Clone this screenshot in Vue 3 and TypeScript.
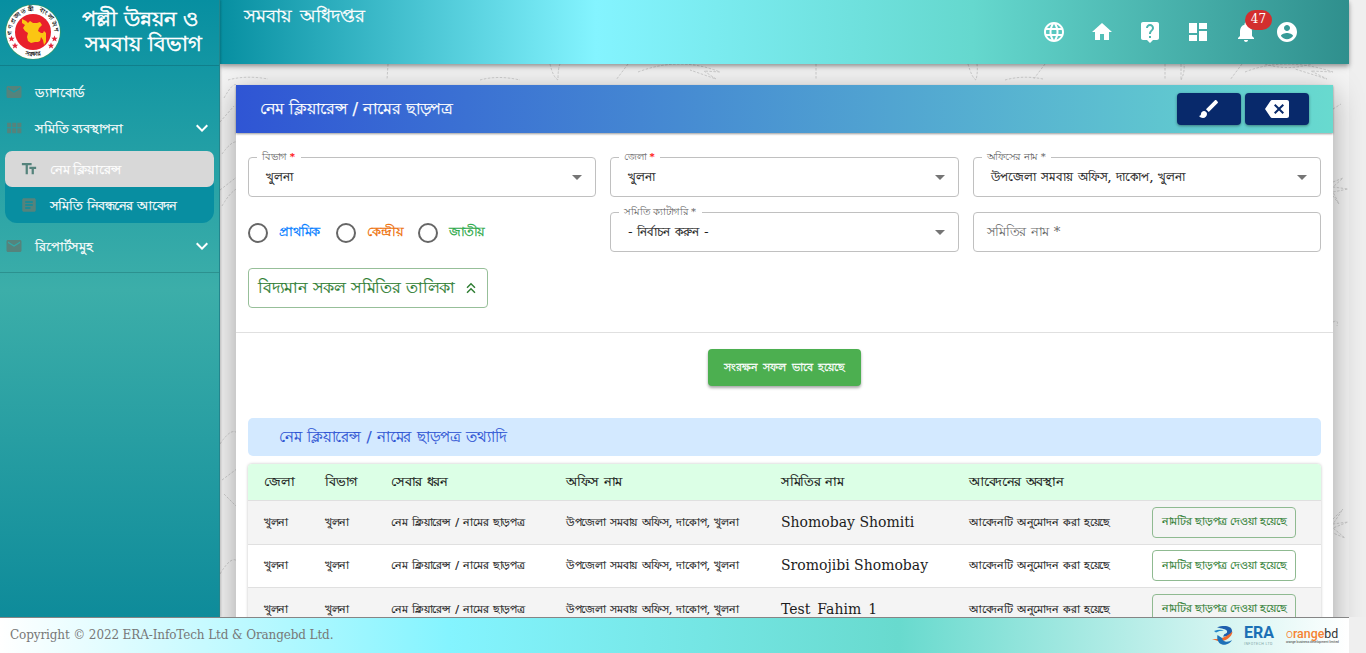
<script setup lang="ts">
interface Field {
  label: string
  value: string
  required?: boolean
  star?: boolean
}

const icons = {
  globe: 'M11.99 2C6.47 2 2 6.48 2 12s4.47 10 9.99 10C17.52 22 22 17.52 22 12S17.52 2 11.99 2zm6.93 6h-2.95c-.32-1.25-.78-2.45-1.38-3.56 1.84.63 3.37 1.91 4.33 3.56zM12 4.04c.83 1.2 1.48 2.53 1.91 3.96h-3.82c.43-1.43 1.08-2.76 1.91-3.96zM4.26 14C4.1 13.36 4 12.69 4 12s.1-1.36.26-2h3.38c-.08.66-.14 1.32-.14 2 0 .68.06 1.34.14 2H4.26zm.82 2h2.95c.32 1.25.78 2.45 1.38 3.56-1.84-.63-3.37-1.9-4.33-3.56zm2.95-8H5.08c.96-1.66 2.49-2.93 4.33-3.56C8.81 5.55 8.35 6.75 8.03 8zM12 19.96c-.83-1.2-1.48-2.53-1.91-3.96h3.82c-.43 1.43-1.08 2.76-1.91 3.96zM14.34 14H9.66c-.09-.66-.16-1.32-.16-2 0-.68.07-1.35.16-2h4.68c.09.65.16 1.32.16 2 0 .68-.07 1.34-.16 2zm.25 5.56c.6-1.11 1.06-2.31 1.38-3.56h2.95c-.96 1.65-2.49 2.93-4.33 3.56zM16.36 14c.08-.66.14-1.32.14-2 0-.68-.06-1.34-.14-2h3.38c.16.64.26 1.31.26 2s-.1 1.36-.26 2h-3.38z',
  home: 'M10 20v-6h4v6h5v-8h3L12 3 2 12h3v8z',
  help: 'M19 2H5c-1.11 0-2 .9-2 2v14c0 1.1.89 2 2 2h4l3 3 3-3h4c1.1 0 2-.9 2-2V4c0-1.1-.9-2-2-2zm-6 16h-2v-2h2v2zm2.07-7.75l-.9.92C13.45 11.9 13 12.5 13 14h-2v-.5c0-1.1.45-2.1 1.17-2.83l1.24-1.26c.37-.36.59-.86.59-1.41 0-1.1-.9-2-2-2s-2 .9-2 2H8c0-2.21 1.79-4 4-4s4 1.79 4 4c0 .88-.36 1.68-.93 2.25z',
  dashboard: 'M3 13h8V3H3v10zm0 8h8v-6H3v6zm10 0h8V11h-8v10zm0-18v6h8V3h-8z',
  bell: 'M12 22c1.1 0 2-.9 2-2h-4c0 1.1.89 2 2 2zm6-6v-5c0-3.07-1.64-5.64-4.5-6.32V4c0-.83-.67-1.5-1.5-1.5s-1.5.67-1.5 1.5v.68C7.63 5.36 6 7.92 6 11v5l-2 2v1h16v-1l-2-2z',
  account: 'M12 2C6.48 2 2 6.48 2 12s4.48 10 10 10 10-4.48 10-10S17.52 2 12 2zm0 3c1.66 0 3 1.34 3 3s-1.34 3-3 3-3-1.34-3-3 1.34-3 3-3zm0 14.2c-2.5 0-4.71-1.28-6-3.22.03-1.99 4-3.08 6-3.08 1.99 0 5.97 1.09 6 3.08-1.29 1.94-3.5 3.22-6 3.22z',
  brush: 'M7 14c-1.66 0-3 1.34-3 3 0 1.31-1.16 2-2 2 .92 1.22 2.49 2 4 2 2.21 0 4-1.79 4-4 0-1.66-1.34-3-3-3zm13.71-9.37l-1.34-1.34c-.39-.39-1.02-.39-1.41 0L9 12.25 11.75 15l8.96-8.96c.39-.39.39-1.02 0-1.41z',
  backspace: 'M22 3H7c-.69 0-1.23.35-1.59.88L0 12l5.41 8.11c.36.53.9.89 1.59.89h15c1.1 0 2-.9 2-2V5c0-1.1-.9-2-2-2zm-3 12.59L17.59 17 14 13.41 10.41 17 9 15.59 12.59 12 9 8.41 10.41 7 14 10.59 17.59 7 19 8.41 15.41 12 19 15.59z',
  mail: 'M20 4H4c-1.1 0-1.99.9-1.99 2L2 18c0 1.1.9 2 2 2h16c1.1 0 2-.9 2-2V6c0-1.1-.9-2-2-2zm0 4l-8 5-8-5V6l8 5 8-5v2z',
  module: 'M2.8 11h5.400V5H2.800v6zm0 8h5.400v-6.600H2.800V19zm6.800 0h5.400v-6.600H9.600V19zm6.800 0h5.400v-6.600h-5.400V19zM9.600 11h5.400V5H9.600v6zm6.800-6v6h5.400V5h-5.400z',
  text: 'M2.5 4v3h5v12h3V7h5V4h-13zm19 5h-9v3h3v7h3v-7h3V9z',
  article: 'M19 3H5c-1.1 0-2 .9-2 2v14c0 1.1.9 2 2 2h14c1.1 0 2-.9 2-2V5c0-1.1-.9-2-2-2zm-5 14H7v-2h7v2zm3-4H7v-2h10v2zm0-4H7V7h10v2z',
  expand: 'M16.59 8.59L12 13.17 7.41 8.59 6 10l6 6 6-6z',
  drop: 'M7 10l5 5 5-5z',
  doubleUp: 'M6 17.59L7.41 19 12 14.42 16.59 19 18 17.59l-6-6zM6 11l1.41 1.41L12 7.83l4.59 4.58L18 11l-6-6z',
}

const toolbar = [icons.globe, icons.home, icons.help, icons.dashboard]

const topFields: Field[] = [
  { label: 'বিভাগ', value: 'খুলনা', required: true },
  { label: 'জেলা', value: 'খুলনা', required: true },
  { label: 'অফিসের নাম', value: 'উপজেলা সমবায় অফিস, দাকোপ, খুলনা', star: true },
]

const radios = [
  { label: 'প্রাথমিক', tone: 'tone-blue' },
  { label: 'কেন্দ্রীয়', tone: 'tone-orange' },
  { label: 'জাতীয়', tone: 'tone-green' },
]

const headers = ['জেলা', 'বিভাগ', 'সেবার ধরন', 'অফিস নাম', 'সমিতির নাম', 'আবেদনের অবস্থান', '']
const names = ['Shomobay Shomiti', 'Sromojibi Shomobay', 'Test_Fahim_1']
</script>

<template>
  <div class="page">
    <div class="body">
      <aside class="sidebar">
        <div class="brand">
          <svg class="seal" viewBox="0 0 56 56">
            <circle cx="28" cy="28" r="27.6" fill="#3f9a62" />
            <circle cx="28" cy="28" r="27" fill="#fff" />
            <circle cx="28" cy="28" r="18" fill="#e8202c" />
            <path
              d="M17 15l4 2 2 2 2-2 3 2 4 0 3-1 2 3-3 3-1 3 3 2 2 0 1-2 2 2 0 9-2 3-1-5-2-3-1 4-2 1-3 0-4 1-3-2-1-4 1-4-3-2-2-3 2-3-3-2z"
              fill="#fbc613"
            />
            <defs>
              <path id="arc-top" d="M7.500 30.500A20.700 20.700 0 1 1 48.500 30.500" />
              <path id="arc-bottom" d="M11 45.200A24.300 24.300 0 0 0 45 45.200" />
            </defs>
            <text class="seal-text"><textPath href="#arc-top" textLength="68">গণপ্রজাতন্ত্রী বাংলাদেশ</textPath></text>
            <text class="seal-text"><textPath href="#arc-bottom" startOffset="50%" text-anchor="middle">সরকার</textPath></text>
            <g fill="#e0243a">
              <path d="M6.500 31.500l.9 2.300h2.300l-1.800 1.500.7 2.300-2.100-1.400-2.100 1.400.7-2.300-1.800-1.500h2.300z" />
              <path d="M10 38.500l.9 2.300h2.300l-1.800 1.500.7 2.300-2.100-1.400-2.100 1.400.7-2.300-1.800-1.500h2.300z" />
              <path d="M49.500 31.500l.9 2.300h2.300l-1.800 1.500.7 2.300-2.100-1.400-2.100 1.400.7-2.300-1.800-1.500h2.300z" />
              <path d="M46 38.500l.9 2.300h2.300l-1.800 1.500.7 2.300-2.100-1.400-2.100 1.400.7-2.300-1.800-1.500h2.300z" />
            </g>
          </svg>
          <div class="brand-name"><span>পল্লী উন্নয়ন ও</span><span class="second">সমবায় বিভাগ</span></div>
        </div>
        <nav>
          <div class="item">
            <svg class="nav-icon" viewBox="0 0 24 24"><path :d="icons.mail" /></svg>
            <span class="tight">ড্যাশবোর্ড</span>
          </div>
          <div class="item">
            <svg class="nav-icon" viewBox="0 0 24 24"><path :d="icons.module" /></svg>
            <span>সমিতি ব্যবস্থাপনা</span>
            <svg class="chevron" viewBox="0 0 24 24"><path :d="icons.expand" /></svg>
          </div>
          <div class="submenu">
            <div class="sub active">
              <svg class="nav-icon" viewBox="0 0 24 24"><path :d="icons.text" /></svg>
              <span>নেম ক্লিয়ারেন্স</span>
            </div>
            <div class="sub">
              <svg class="nav-icon" viewBox="0 0 24 24"><path :d="icons.article" /></svg>
              <span class="tight">সমিতি নিবন্ধনের আবেদন</span>
            </div>
          </div>
          <div class="item last">
            <svg class="nav-icon" viewBox="0 0 24 24"><path :d="icons.mail" /></svg>
            <span>রিপোর্টসমুহ</span>
            <svg class="chevron" viewBox="0 0 24 24"><path :d="icons.expand" /></svg>
          </div>
        </nav>
      </aside>

      <section class="content">
        <header class="topbar">
          <h1>সমবায় অধিদপ্তর</h1>
          <div class="tools">
            <svg v-for="(icon, i) in toolbar" :key="i" viewBox="0 0 24 24"><path :d="icon" /></svg>
            <div class="bell">
              <svg viewBox="0 0 24 24"><path :d="icons.bell" /></svg>
              <span class="badge">47</span>
            </div>
            <svg viewBox="0 0 24 24"><path :d="icons.account" /></svg>
          </div>
        </header>

        <main class="main">
          <svg class="motif" viewBox="0 0 1129 553">
            <path d="M8 16q18-5 40-1M4 34q10-18 14-12M0 58l14-16M2 90q10-14 16-12M0 126l18-14M2 142q8-14 16-18M0 380q12-18 18-10M2 416l16-12M4 430l14 14M0 510q12-20 18-12" />
            <path d="M168 0l-1 16M260 16q18-5 40 0M330 0q3 13 8 16q0-12 2-16M408 0l-12 16M418 8q42-16 82 0l-16-1 12 8-26-9M596 0l0 16M748 0q4 14 8 16q2-8 1-16M825 0l-12 16M785 16q18-5 38-1M945 0l0 16M961 0q0 12 0 16q4-8 3-16M1022 0l-12 16M1025 8q40-16 88 0l-22-1 16 8-32-10M1045 0q25 8 52-2" />
            <path d="M1113 118l10-4-10 9 15 2-15 3 6 12-6-8M1113 45l8-5M1113 258q6-3 4 4M1113 455l10-10-10 15 15-2-15 6 12 10-12-5" />
          </svg>
          <div class="card">
            <div class="card-head">
              <h2>নেম ক্লিয়ারেন্স / নামের ছাড়পত্র</h2>
              <div class="actions">
                <button><svg viewBox="0 0 24 24"><path :d="icons.brush" /></svg></button>
                <button><svg viewBox="0 0 24 24"><path :d="icons.backspace" /></svg></button>
              </div>
            </div>

            <div class="form">
              <div v-for="field in topFields" :key="field.label" class="field">
                <label>{{ field.label }}<i v-if="field.required" class="req">*</i><template v-if="field.star"> *</template></label>
                <span class="value">{{ field.value }}</span>
                <svg viewBox="0 0 24 24"><path :d="icons.drop" /></svg>
              </div>
              <div class="radios">
                <div v-for="radio in radios" :key="radio.label" class="radio" :class="radio.tone">
                  <i></i><span>{{ radio.label }}</span>
                </div>
              </div>
              <div class="field">
                <label>সমিতি ক্যাটাগরি *</label>
                <span class="value">- নির্বাচন করুন -</span>
                <svg viewBox="0 0 24 24"><path :d="icons.drop" /></svg>
              </div>
              <div class="field"><span class="value placeholder">সমিতির নাম *</span></div>
            </div>

            <button class="list-button">
              <span>বিদ্যমান সকল সমিতির তালিকা</span>
              <svg viewBox="0 0 24 24"><path :d="icons.doubleUp" /></svg>
            </button>

            <div class="save-row"><button class="save">সংরক্ষন সফল ভাবে হয়েছে</button></div>

            <h3>নেম ক্লিয়ারেন্স / নামের ছাড়পত্র তথ্যাদি</h3>

            <div class="table">
              <div class="row head"><span v-for="(h, i) in headers" :key="i">{{ h }}</span></div>
              <div v-for="name in names" :key="name" class="row">
                <span>খুলনা</span>
                <span>খুলনা</span>
                <span>নেম ক্লিয়ারেন্স / নামের ছাড়পত্র</span>
                <span>উপজেলা সমবায় অফিস, দাকোপ, খুলনা</span>
                <span class="name">{{ name }}</span>
                <span>আবেদনটি অনুমোদন করা হয়েছে</span>
                <span class="cell-action"><button class="issued">নামটির ছাড়পত্র দেওয়া হয়েছে</button></span>
              </div>
            </div>
          </div>
        </main>
      </section>
    </div>

    <footer class="footer">
      <span class="copyright">Copyright © 2022 ERA-InfoTech Ltd &amp; Orangebd Ltd.</span>
      <div class="logos">
        <svg class="swoosh" viewBox="0 0 22 19">
          <path d="M5 1.500C11-1 20-.5 20 5c0 4-4 5.500-9 5.500l1.500-2.500C14 7.500 15.500 7 15 5 14 3 10 2.500 5 1.500z" fill="#1f5fae" />
          <path d="M2 5q6-2 10-.5-5 0-8 2z" fill="#2287c9" />
          <path d="M0 13c6 .5 14-1 20.500-7.500C20 12 12 16 6 15z" fill="#f26a2c" />
          <path d="M5.500 9C4 16 9 19.500 14 18.500c3-.6 5-2.500 6-4.500-4 2.500-9 2.500-10-2z" fill="#1d71b8" />
        </svg>
        <div class="era"><b>ERA</b><small>INFOTECH LTD</small></div>
        <div class="orange-logo"><div><i>o</i><b>range</b><span>bd</span></div><small>orange business development limited</small></div>
      </div>
    </footer>
  </div>
</template>

<style>
body {
  margin: 0;
  overflow: hidden;
  background: #efefef;
}
</style>

<style scoped>
.page {
  display: flex;
  flex-direction: column;
  width: 1366px;
  height: 653px;
  overflow: hidden;
  font-family: "DejaVu Serif", serif;
  font-size: 13px;
  color: #1c1c1c;
}
* {
  box-sizing: border-box;
}
svg {
  flex: none;
  fill: currentColor;
}
button {
  font-family: inherit;
  padding: 0;
  border: 0;
}
h1, h2, h3 {
  margin: 0;
  font-weight: 400;
}
.body {
  display: flex;
  height: 617px;
  width: 1366px;
  overflow: hidden;
}
.sidebar {
  width: 220px;
  flex: none;
  border-right: 1px solid #23858c;
  background: linear-gradient(#078fa1, #3caea9 47%, #0e8b9a);
  color: #fff;
  position: relative;
  z-index: 2;
  box-shadow: 1px 0 2px rgba(0, 0, 0, .2);
}
.brand {
  height: 66px;
  border-bottom: 1px solid #107f8b;
  display: flex;
  padding: 4px 0 0 5px;
}
.seal {
  width: 56px;
  height: 56px;
}
.seal-text {
  font-size: 6px;
  font-weight: 700;
  fill: #111;
}
.brand-name {
  display: flex;
  flex-direction: column;
  margin-left: 21px;
  font-size: 20.600px;
  line-height: 25px;
  padding-top: 3px;
  white-space: nowrap;
  -webkit-text-stroke: .6px #fff;
}
.brand-name .second {
  padding-left: 3px;
  font-size: 21px;
}
nav {
  padding-top: 8px;
  border-bottom: 1px solid #2c918f;
  height: 207px;
}
.item, .sub {
  display: flex;
  align-items: center;
  height: 36px;
  letter-spacing: -.25px;
  -webkit-text-stroke: .25px #fff;
}
.item > span, .sub > span {
  padding-top: 2px;
}
.tight {
  letter-spacing: -.6px;
  word-spacing: 1px;
}
.item {
  padding: 0 5px;
}
.nav-icon {
  width: 18px;
  height: 18px;
  color: #55837c;
  margin-right: 12px;
}
.chevron {
  width: 24px;
  height: 24px;
  margin-left: auto;
}
.submenu {
  margin: 5px 5px 0;
  background: #088ea1;
  border-radius: 8px 8px 12px 12px;
}
.sub {
  padding-left: 15px;
}
.sub.active {
  background: #d8d8d8;
  border-radius: 7px;
}
.last {
  margin-top: 5px;
}
.content {
  flex: 1;
  display: flex;
  flex-direction: column;
}
.topbar {
  width: 1129px;
  height: 64px;
  flex: none;
  display: flex;
  justify-content: space-between;
  background: linear-gradient(90deg, #078fa1, #84f4ff 33.3%, #65d8ce 66.6%, #2f8f8d);
  color: #fff;
  box-shadow: 0 2px 4px rgba(0, 0, 0, .3), 0 4px 6px rgba(0, 0, 0, .12);
  position: relative;
  z-index: 1;
}
.topbar h1 {
  font-size: 18.400px;
  line-height: 32px;
  padding-left: 24px;
  word-spacing: 2px;
  -webkit-text-stroke: .3px #fff;
}
.tools {
  display: flex;
  align-items: center;
  gap: 24px;
  padding-right: 50px;
}
.tools svg {
  display: block;
  width: 24px;
  height: 24px;
}
.bell {
  position: relative;
  margin-right: -7px;
}
.badge {
  position: absolute;
  left: 11px;
  top: -10px;
  width: 27px;
  height: 20px;
  border-radius: 10px;
  background: #d32f2f;
  font-size: 12px;
  line-height: 19px;
  text-align: center;
}
.main {
  flex: 1;
  width: 1129px;
  padding: 21px 16px 0;
  background: #f4f4f4;
  position: relative;
}
.motif {
  position: absolute;
  left: 0;
  top: 0;
  width: 1129px;
  height: 553px;
  fill: none;
  stroke: #cacaca;
  stroke-width: .9;
  stroke-dasharray: 2.500 1.500;
}
.card {
  position: relative;
  height: 800px;
  background: #fff;
  box-shadow: 0 8px 28px rgba(0, 0, 0, .35);
}
.card-head {
  height: 48px;
  display: flex;
  justify-content: space-between;
  align-items: center;
  padding: 0 24px;
  background: linear-gradient(90deg, #2f55d4, #68dacf);
  color: #fff;
  box-shadow: 0 1px 2px rgba(0, 0, 0, .4);
}
.card-head h2 {
  font-size: 16.200px;
  letter-spacing: -.55px;
  word-spacing: .8px;
  padding-top: 1px;
  -webkit-text-stroke: .25px #fff;
}
.actions {
  display: flex;
  gap: 4px;
}
.actions button {
  width: 64px;
  height: 32px;
  border-radius: 4px;
  background: #08296b;
  color: #fff;
  display: flex;
  align-items: center;
  justify-content: center;
  box-shadow: 0 1px 3px rgba(0, 0, 0, .4);
}
.actions svg {
  width: 24px;
  height: 24px;
}
.form {
  display: grid;
  grid-template-columns: repeat(3, 1fr);
  gap: 15px 14px;
  padding: 24px 12px 0;
}
.field {
  position: relative;
  height: 40px;
  border: 1px solid #c0c0c0;
  border-radius: 4px;
  display: flex;
  align-items: center;
  justify-content: space-between;
  padding: 0 6px 0 17px;
}
.value {
  padding-top: 1px;
  font-size: 12.400px;
  word-spacing: 1px;
  -webkit-text-stroke: .2px currentColor;
}
.field label {
  position: absolute;
  top: -9px;
  left: 8px;
  padding: 0 6px 0 5px;
  background: #fff;
  font-size: 10px;
  line-height: 16px;
  letter-spacing: -.4px;
  color: #606060;
  white-space: nowrap;
}
.req {
  color: #f00;
  font-style: normal;
  font-weight: 700;
  margin-left: 3px;
}
.field svg {
  width: 24px;
  height: 24px;
  color: #757575;
}
.placeholder {
  font-size: 13.200px;
  letter-spacing: -.4px;
  color: #666;
  margin-left: -4px;
  -webkit-text-stroke: 0;
}
.radios {
  display: grid;
  grid-template-columns: 88px 82px 80px;
  align-items: center;
  padding-top: 1px;
}
.radio {
  display: flex;
  align-items: center;
  gap: 11px;
  letter-spacing: -.2px;
  -webkit-text-stroke: .3px currentColor;
  white-space: nowrap;
}
.radio i {
  flex: none;
  width: 20px;
  height: 20px;
  border: 2px solid #666;
  border-radius: 50%;
}
.tone-blue { color: #007bff; }
.tone-orange { color: #ed6c02; }
.tone-green { color: #28a745; }
.tone-green span { letter-spacing: -1px; }
.list-button {
  display: flex;
  align-items: center;
  justify-content: space-between;
  margin: 16px 0 0 12px;
  width: 240px;
  height: 40px;
  padding: 0 7px 0 9px;
  border: 1px solid #97bf99;
  border-radius: 4px;
  background: #fff;
  color: #2e7d32;
  font-size: 16.200px;
  letter-spacing: -.5px;
  word-spacing: 1.200px;
  -webkit-text-stroke: .2px currentColor;
  white-space: nowrap;
}
.list-button span {
  padding-top: 1px;
}
.list-button svg {
  width: 18px;
  height: 18px;
}
.save-row {
  margin-top: 24px;
  padding-top: 16px;
  border-top: 1px solid #e0e0e0;
  display: flex;
  justify-content: center;
}
.save {
  width: 153px;
  height: 37px;
  border-radius: 4px;
  background: #4caf50;
  color: #fff;
  font-size: 11.200px;
  word-spacing: 2px;
  padding-top: 2px;
  -webkit-text-stroke: .3px currentColor;
  white-space: nowrap;
  box-shadow: 0 2px 3px rgba(0, 0, 0, .35);
}
h3 {
  height: 38px;
  margin: 32px 12px 0;
  padding-left: 31px;
  border-radius: 5px;
  background: #d3e9ff;
  color: #2f55d4;
  font-size: 15.300px;
  letter-spacing: -.45px;
  word-spacing: 1.700px;
  line-height: 39px;
  -webkit-text-stroke: .15px currentColor;
}
.table {
  margin: 8px 12px 0;
  border-radius: 4px;
  overflow: hidden;
  box-shadow: 0 0 3px rgba(0, 0, 0, .25);
}
.row {
  display: grid;
  grid-template-columns: 61px 66px 175px 215px 188px 183px 1fr;
  align-items: center;
  height: 43.600px;
  padding-left: 16px;
  border-bottom: 1px solid #e0e0e0;
  font-size: 11.300px;
  letter-spacing: -.3px;
  word-spacing: 1.200px;
  white-space: nowrap;
  -webkit-text-stroke: .2px currentColor;
}
.row > span {
  padding-top: 2px;
}
.row:nth-child(even) {
  background: #f4f4f4;
}
.row.head {
  height: 37px;
  background: #dcffe6;
  font-size: 12.700px;
  letter-spacing: -.4px;
  color: #111;
}
.row.head > span {
  padding-top: 0;
}
.row > .name {
  font-size: 14px;
  letter-spacing: 0;
  word-spacing: 0;
  padding: 0 0 1px;
  -webkit-text-stroke: 0;
}
.row > .cell-action {
  padding-top: 0;
}
.issued {
  display: block;
  width: 144px;
  height: 31px;
  padding-top: 1px;
  border: 1px solid #8fba91;
  border-radius: 4px;
  background: transparent;
  color: #2e7d32;
  font-size: 10.800px;
  letter-spacing: -.2px;
  white-space: nowrap;
}
.footer {
  width: 1349px;
  height: 36px;
  border-top: 1px solid #858585;
  background: linear-gradient(90deg, #fff, #84f4ff 33.3%, #68dace 66.6%, #fff);
  display: flex;
  align-items: center;
  justify-content: space-between;
  padding: 0 10px;
}
.copyright {
  font-size: 12px;
  letter-spacing: -.12px;
  color: #777;
  padding-bottom: 2px;
}
.logos {
  display: flex;
  align-items: center;
}
.swoosh {
  width: 22px;
  height: 19px;
}
.era {
  display: flex;
  flex-direction: column;
  margin-left: 10px;
  width: 31px;
  font-family: Roboto, sans-serif;
}
.era b {
  font-size: 16px;
  line-height: 13px;
  color: #1c70b5;
}
.era small, .orange-logo small {
  white-space: nowrap;
}
.era small {
  margin-top: 3px;
  font-size: 3.600px;
  line-height: 4px;
  color: #7fa6a8;
  letter-spacing: .4px;
}
.orange-logo {
  margin-left: 11px;
  width: 53px;
  font-family: Roboto, sans-serif;
}
.orange-logo div {
  display: flex;
  font-size: 12.400px;
  line-height: 13px;
}
.orange-logo i {
  font-style: normal;
  font-weight: 300;
  color: #f58232;
}
.orange-logo b {
  color: #f58232;
  font-weight: 500;
}
.orange-logo span {
  color: #333;
}
.orange-logo small {
  display: block;
  font-size: 3.200px;
  line-height: 4px;
  color: #333;
}
</style>
